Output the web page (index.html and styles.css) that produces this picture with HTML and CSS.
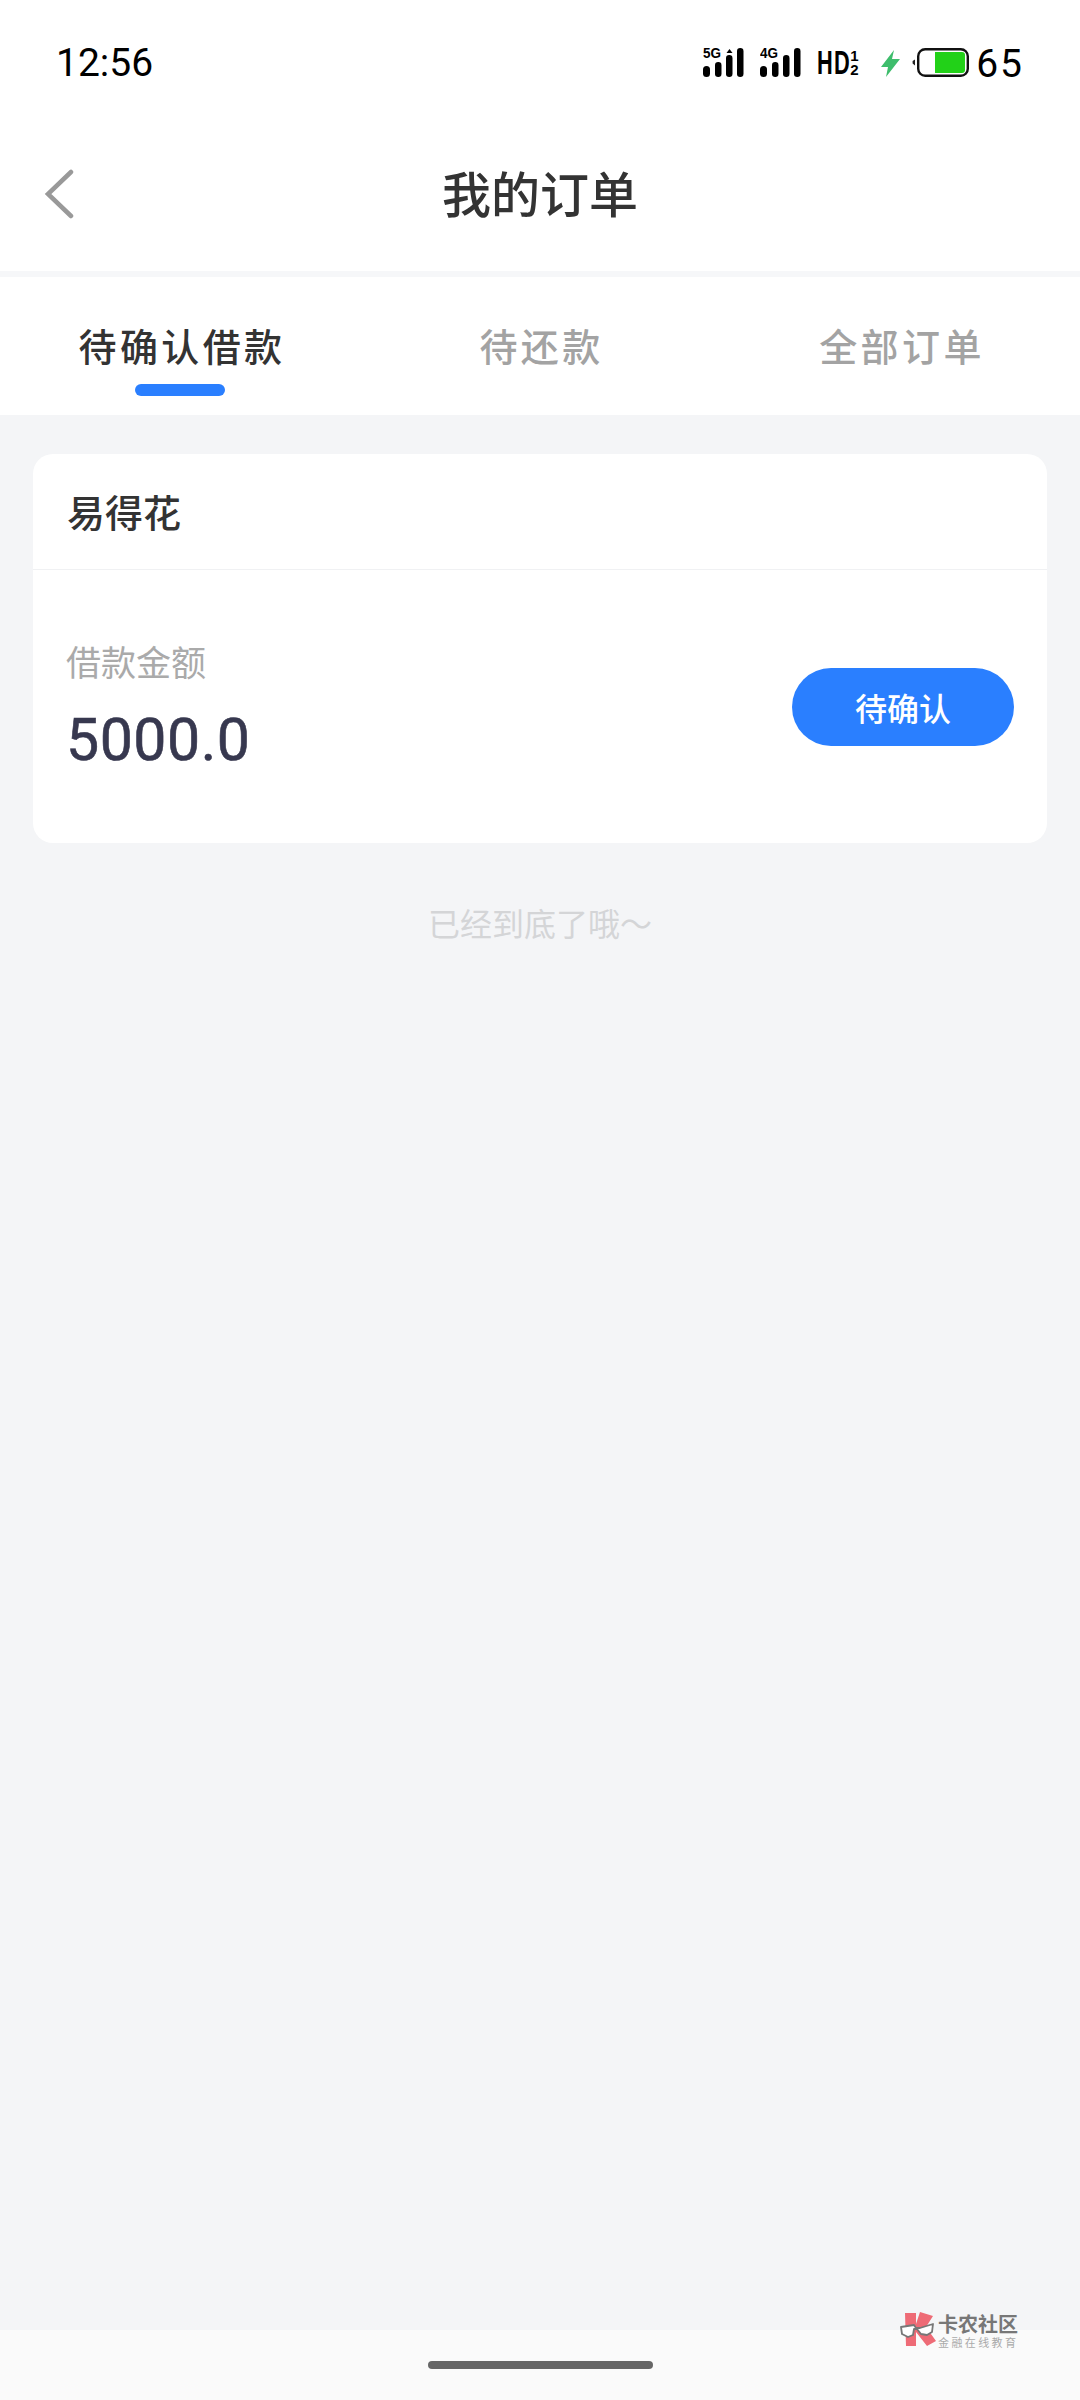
FILE: index.html
```html
<!DOCTYPE html>
<html lang="zh-CN">
<head>
    <meta charset="UTF-8">
    <meta name="viewport" content="width=device-width, initial-scale=1.0">
    <title>我的订单</title>
    <link rel="stylesheet" href="styles.css">
</head>
<body>
    <div class="page">
        <div class="status-bar">
            <span class="time">12:56</span>
            <div class="status-icons">
                <svg class="signal" width="41" height="33" viewBox="0 -3 41 33">
                    <text x="0" y="11" class="net-label" textLength="18" lengthAdjust="spacingAndGlyphs">5G</text>
                    <path d="M23.5 6l3-4 3 4z" fill="#000"/>
                    <rect x="0" y="19" width="7" height="11" rx="3.5"/>
                    <rect x="12" y="15" width="6.5" height="15" rx="3.2"/>
                    <rect x="23" y="8" width="6.5" height="22" rx="3.2"/>
                    <rect x="34" y="1" width="6.5" height="29" rx="3.2"/>
                </svg>
                <svg class="signal" width="41" height="33" viewBox="0 -3 41 33">
                    <text x="0" y="11" class="net-label" textLength="18" lengthAdjust="spacingAndGlyphs">4G</text>
                    <rect x="0" y="19" width="7" height="11" rx="3.5"/>
                    <rect x="12" y="15" width="6.5" height="15" rx="3.2"/>
                    <rect x="23" y="8" width="6.5" height="22" rx="3.2"/>
                    <rect x="34" y="1" width="6.5" height="29" rx="3.2"/>
                </svg>
                <div class="hd">
                    <span class="hd-main">HD</span>
                    <span class="hd-sub"><span>1</span><span>2</span></span>
                </div>
                <svg class="bolt" width="19" height="27" viewBox="0 0 19 27">
                    <path d="M13 0L0 17h7L5 27 19 9h-8z" fill="#3ebd6c"/>
                </svg>
                <svg class="battery" width="57" height="30" viewBox="0 0 57 30">
                    <path d="M3 11.5v6L0.6 15.5v-2.5z" fill="#222"/>
                    <rect x="6.2" y="1.2" width="49.6" height="26.6" rx="7" fill="#fff" stroke="#111" stroke-width="2.4"/>
                    <path d="M23 4h27a3 3 0 0 1 3 3v15a3 3 0 0 1-3 3H23z" fill="#22d118"/>
                </svg>
                <span class="level">65</span>
            </div>
        </div>

        <div class="header">
            <svg class="back" width="30" height="50" viewBox="0 0 30 50">
                <path d="M27 3L4 25l23 22" fill="none" stroke="#999" stroke-width="4.5" stroke-linecap="round"/>
            </svg>
            <h1 class="title">我的订单</h1>
        </div>

        <div class="tabs">
            <div class="tab active">待确认借款</div>
            <div class="tab">待还款</div>
            <div class="tab">全部订单</div>
        </div>

        <div class="list">
            <div class="card">
                <div class="card-head">易得花</div>
                <div class="card-body">
                    <div class="amount-box">
                        <div class="amount-label">借款金额</div>
                        <div class="amount">5000.0</div>
                    </div>
                    <button class="status-btn">待确认</button>
                </div>
            </div>
            <div class="end-tip">已经到底了哦～</div>
        </div>

        <div class="home-bar">
            <div class="home-pill"></div>
        </div>

        <div class="watermark">
            <svg width="36" height="36" viewBox="0 0 36 36">
                <path d="M5 1h11v11l4-12 13 4-7 11 10 14-9 5-11-14v14H6z" fill="#ee6b76"/>
                <path d="M1 15l13-2 2 3 4 0 13-4-1 8-5 3-6-1-4-5-3 0-1 6-5 2-6-3z" fill="#fff" stroke="#777" stroke-width="1.8" stroke-linejoin="round"/>
            </svg>
            <div class="watermark-text">
                <div class="watermark-name">卡农社区</div>
                <div class="watermark-sub">金融在线教育</div>
            </div>
        </div>
    </div>
</body>
</html>
```

FILE: styles.css
```css
* {
    box-sizing: border-box;
}
body {
    margin: 0;
    font-family: "Noto Sans CJK SC", "Noto Sans", sans-serif;
    background: #f4f5f7;
}
.page {
    position: relative;
    width: 1080px;
    height: 2400px;
    display: flex;
    flex-direction: column;
    overflow: hidden;
}
.status-bar {
    height: 125px;
    padding: 0 56px 0 56px;
    background: #fff;
    display: flex;
    justify-content: space-between;
    align-items: flex-start;
    color: #000;
    font-family: Roboto, sans-serif;
}
.time {
    margin-top: 41px;
    font-size: 39px;
    line-height: 44px;
}
.status-icons {
    margin-top: 47px;
    display: flex;
    align-items: flex-start;
}
.signal {
    fill: #000;
    margin-top: -3px;
    margin-right: 16px;
}
.net-label {
    font-family: "Liberation Sans", sans-serif;
    font-size: 15px;
    font-weight: 700;
}
.hd {
    width: 46px;
    height: 30px;
    margin-right: 18px;
    display: flex;
    font-family: "Liberation Sans", sans-serif;
    font-weight: 700;
}
.hd-main {
    font-size: 33px;
    line-height: 30px;
    width: 33px;
    transform: scaleX(0.66);
    transform-origin: left center;
    letter-spacing: 2px;
    margin-top: 1px;
}
.hd-sub {
    display: flex;
    flex-direction: column;
    font-size: 15px;
    line-height: 14px;
    margin-top: 2px;
}
.bolt {
    margin-top: 3px;
    margin-right: 12px;
}
.battery {
    margin-top: 1px;
    margin-right: 7px;
}
.level {
    font-size: 39px;
    line-height: 34px;
    letter-spacing: 2px;
}
.header {
    position: relative;
    height: 152px;
    background: #fff;
    border-bottom: 6px solid #f6f7f9;
    padding-bottom: 12px;
    display: flex;
    align-items: center;
    justify-content: center;
}
.back {
    position: absolute;
    left: 44px;
    top: 44px;
}
.title {
    margin: 0;
    font-size: 49px;
    font-weight: 500;
    line-height: 60px;
    color: #333;
}
.tabs {
    height: 138px;
    background: #fff;
    display: grid;
    grid-template-columns: 362px 359px 359px;
}
.tab {
    position: relative;
    padding-top: 42px;
    text-align: center;
    font-size: 38px;
    font-weight: 500;
    line-height: 52px;
    letter-spacing: 3.4px;
    color: #a3a3a3;
}
.tab:last-child {
    padding-left: 3px;
}
.tab.active {
    padding-left: 2px;
    color: #333;
}
.tab.active::after {
    content: "";
    position: absolute;
    left: 135px;
    top: 107px;
    width: 90px;
    height: 12px;
    border-radius: 6px;
    background: #2a7fff;
}
.list {
    flex: 1;
    padding: 39px 33px 0;
}
.card {
    background: #fff;
    border-radius: 20px;
    height: 389px;
}
.card-head {
    height: 113px;
    padding: 0 34px;
    display: flex;
    align-items: center;
    font-size: 38px;
    font-weight: 500;
    color: #333;
}
.card-body {
    border-top: 1px solid #f0f1f3;
    margin-top: 2px;
    padding: 69px 33px 0 33px;
    display: flex;
    justify-content: space-between;
    align-items: flex-start;
}
.amount-label {
    font-size: 35px;
    line-height: 44px;
    color: #aaa;
}
.amount {
    margin-top: 23px;
    font-family: Roboto, sans-serif;
    font-size: 59px;
    line-height: 68px;
    letter-spacing: 0.5px;
    -webkit-text-stroke: 0.6px #37384f;
    color: #37384f;
}
.status-btn {
    margin-top: 29px;
    width: 222px;
    height: 78px;
    border: none;
    border-radius: 39px;
    background: #2a7fff;
    color: #fff;
    font-family: inherit;
    font-size: 32px;
    font-weight: 500;
}
.end-tip {
    margin-top: 55px;
    text-align: center;
    font-size: 32px;
    line-height: 48px;
    color: #d4d5d7;
}
.home-bar {
    height: 70px;
    padding-top: 31px;
    background: #fafafa;
}
.home-pill {
    width: 225px;
    height: 8px;
    margin: 0 auto;
    border-radius: 4px;
    background: #666;
}
.watermark {
    position: absolute;
    left: 900px;
    top: 2312px;
    display: flex;
    gap: 2px;
}
.watermark-name {
    font-size: 20px;
    line-height: 23px;
    font-weight: 700;
    color: #777;
}
.watermark-sub {
    margin-top: 1px;
    font-size: 11px;
    line-height: 13px;
    letter-spacing: 2.4px;
    color: #aaa;
}
```
